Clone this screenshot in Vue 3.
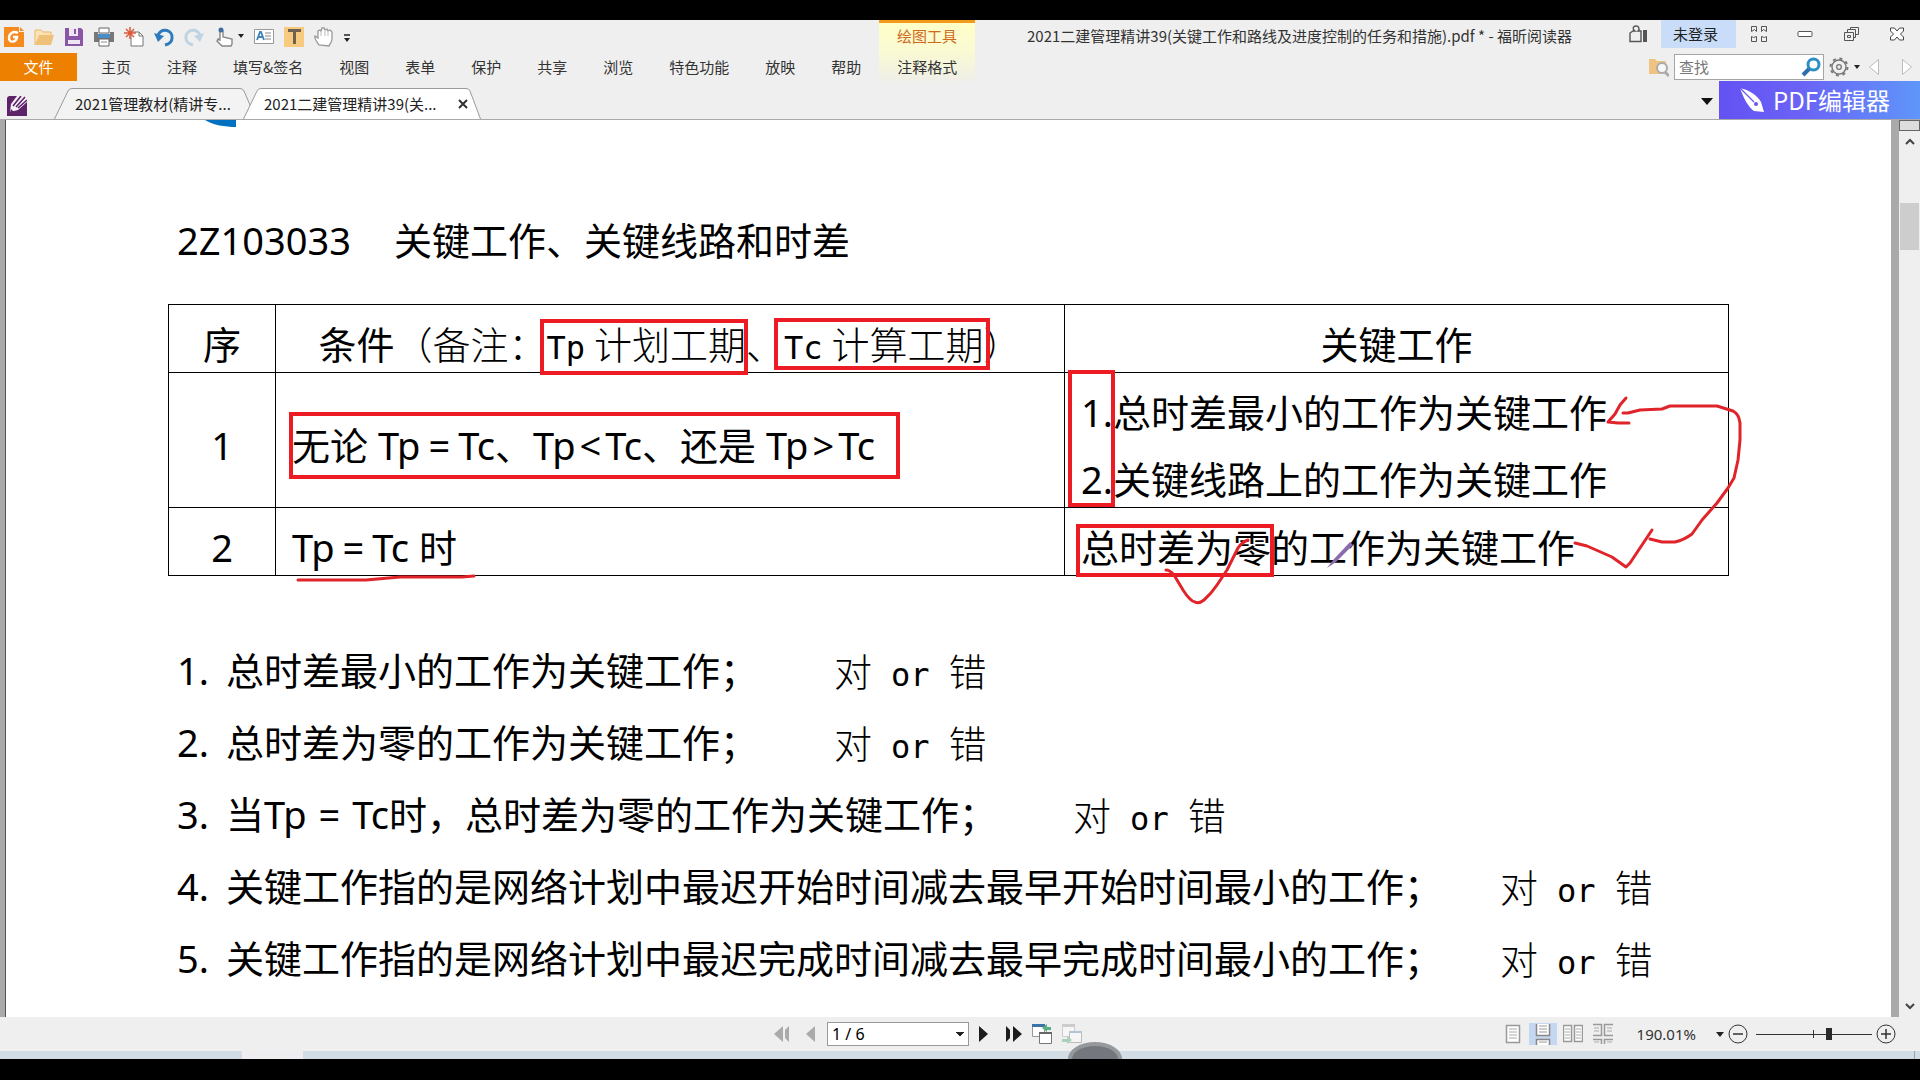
<script setup>
import { ref } from 'vue'

const menus = ['主页', '注释', '填写&签名', '视图', '表单', '保护', '共享', '浏览', '特色功能', '放映', '帮助']
const page = ref('1 / 6')
const keyword = ref('')
const zoom = ref(64)

const questions = [
  { text: '总时差最小的工作为关键工作；' },
  { text: '总时差为零的工作为关键工作；' },
  { formula: true, text: '时，总时差为零的工作为关键工作；' },
  { text: '关键工作指的是网络计划中最迟开始时间减去最早开始时间最小的工作；', long: true },
  { text: '关键工作指的是网络计划中最迟完成时间减去最早完成时间最小的工作；', long: true }
]
</script>

<template>
  <div class="screen">
    <header class="chrome">
      <div class="title-row">
        <div class="quick">
          <button aria-label="福昕">
            <svg width="20" height="20"><path d="M0 0h15v5h5v15H0z" fill="#f58a1f" /><path d="M16 0l4 4h-4z" fill="#f58a1f" /><path d="M14 6C9 3 5 7 5 11c0 5 7 5 8-1h-4" fill="none" stroke="#fff" stroke-width="2.4" /></svg>
          </button>
          <button aria-label="打开">
            <svg width="20" height="20"><path d="M1 18V3h6l2 2h8v4" fill="#fbe3b5" stroke="#e9b765" /><path d="M1 18L5 8h15l-3 10z" fill="#efc078" /></svg>
          </button>
          <button aria-label="保存">
            <svg width="20" height="20"><path d="M1 1h16l2 2v16H1z" fill="#8a56a6" /><path d="M5 1h9v8H5z" fill="#efe6f4" /><path d="M10 2h2v5h-2z" fill="#8a56a6" /><path d="M4 13h12v4H4z" fill="#efe6f4" /></svg>
          </button>
          <button aria-label="打印">
            <svg width="20" height="20"><path d="M5 1h10v5H5z" fill="#fff" stroke="#666" /><path d="M0 5h4v5h12V5h4v10H0z" fill="#777" /><path d="M4 7h12v4H4z" fill="#4a8dc6" /><path d="M5 12h10v7H5z" fill="#fff" stroke="#666" /><path d="M7 15h6" stroke="#888" /></svg>
          </button>
          <button aria-label="新建">
            <svg width="20" height="20"><path d="M7 5h8l4 4v10H7z" fill="#fff" stroke="#777" /><path d="M15 5v4h4" fill="none" stroke="#777" /><path d="M6 0v12M0 6h12M2 2l8 8M10 2l-8 8" stroke="#e0593a" stroke-width="1.5" /></svg>
          </button>
          <button aria-label="撤销">
            <svg width="20" height="20"><path d="M4 8C8 0 19 3 18 11c0 4-3 6-7 7" fill="none" stroke="#2d7bbd" stroke-width="3" /><path d="M0 6l10 3-6 6z" fill="#2d7bbd" /></svg>
          </button>
          <button aria-label="重做">
            <svg width="20" height="20"><path d="M16 8C12 0 1 3 2 11c0 4 3 6 7 7" fill="none" stroke="#bfd4e3" stroke-width="3" /><path d="M20 6L10 9l6 6z" fill="#bfd4e3" /></svg>
          </button>
          <button class="wide" aria-label="手型">
            <svg width="30" height="20"><path d="M6 13V4a2 2 0 0 1 3 0v6l9 2v5l-1 2H8l-5-5 1-2z" fill="#fff" stroke="#888" stroke-width="1.4" /><circle cx="7" cy="3" r="2.5" fill="#3c6ea3" /><path d="M24 7h6l-3 4z" fill="#222" /></svg>
          </button>
          <button aria-label="文本框">
            <svg width="20" height="20"><path d="M.5 2.500h19v14H.5z" fill="#fff" stroke="#999" /><path d="M3 13l3-8h1l3 8M4 10h5" fill="none" stroke="#3f83bd" stroke-width="1.800" /><path d="M11 6h6M11 9h6M11 12h6" stroke="#888" /></svg>
          </button>
          <button aria-label="高亮">
            <svg width="20" height="20"><path d="M0 0h20v20H0z" fill="#f7ca7f" /><path d="M4 2h13v3h-5v12H9V5H4z" fill="#6f6250" /></svg>
          </button>
          <button aria-label="平移">
            <svg width="20" height="20"><path d="M5 18C2 14 0 11 1 9l3 2V4l2-1 1 1 1-3h2l1 2 2-1 1 2 2-1 2 2v7c0 3-2 4-3 7z" fill="#fff" stroke="#999" stroke-width="1.300" /><path d="M7 4v5M11 3v6M14 4v5" stroke="#bbb" /></svg>
          </button>
          <button aria-label="自定义">
            <svg width="20" height="20"><path d="M0 8h6" stroke="#222" stroke-width="1.500" /><path d="M0 11h6l-3 4z" fill="#222" /></svg>
          </button>
        </div>
        <div class="context-title">绘图工具</div>
        <h1 class="doc-title">2021二建管理精讲39(关键工作和路线及进度控制的任务和措施).pdf * - 福昕阅读器</h1>
        <div class="window-buttons">
          <button aria-label="点赞">
            <svg width="20" height="20"><path d="M2 17.500V9l3-2h2C4 5 5 2 8 2c3 0 4 3 2 5h3v10.500z" fill="none" stroke="#555" stroke-width="1.400" /><path d="M15 6h4v12h-4z" fill="#555" /></svg>
          </button>
          <button class="login">未登录</button>
          <button aria-label="功能区">
            <svg width="18" height="18" fill="none" stroke="#555"><path d="M1.500 1.500h5v5l-2-2-3 2zM11.500 1.500h5v5l-3-2-2 2zM1.500 11.500l2 1 3-1v5h-5zM11.500 11.500l3 1 2-1v5h-5z" /></svg>
          </button>
          <button aria-label="最小化">
            <svg width="16" height="16"><rect x="1" y="5.500" width="14" height="5" rx="1" fill="#fff" stroke="#555" /></svg>
          </button>
          <button aria-label="还原">
            <svg width="16" height="16" fill="none" stroke="#555"><path d="M1.500 6.500h9v8h-9zM4.500 9.500h3v2h-3zM4.500 6V3.500h8v8h-2M7.500 3V1.500h8v7h-3" /></svg>
          </button>
          <button aria-label="关闭">
            <svg width="16" height="16" fill="#fff" stroke="#444"><path d="M1.500 2h4L8 5l2.500-3h4v3l-3 3 3 3v3h-4L8 11l-2.500 3h-4v-3l3-3-3-3z" /></svg>
          </button>
        </div>
      </div>

      <div class="menu-row">
        <button class="file">文件</button>
        <nav class="menus">
          <button v-for="m in menus" :key="m">{{ m }}</button>
          <button class="context-tab">注释格式</button>
        </nav>
        <div class="finder">
          <button aria-label="高级查找">
            <svg width="20" height="20"><path d="M0 2h6l2 2h9v13H0z" fill="#efc483" /><circle cx="13" cy="11" r="5" fill="#f7f7f7" stroke="#aaa" stroke-width="2" /><path d="M16 15l4 4" stroke="#aaa" stroke-width="3" /></svg>
          </button>
          <label class="search">
            <input v-model="keyword" type="text" placeholder="查找" aria-label="查找" />
            <svg width="20" height="20"><circle cx="12.500" cy="7.500" r="5.500" fill="none" stroke="#2b8fc4" stroke-width="3" /><path d="M8 12l-6 6" stroke="#2a6fae" stroke-width="4" /></svg>
          </label>
          <button aria-label="设置">
            <svg width="34" height="20"><circle cx="10" cy="10" r="7" fill="none" stroke="#777" stroke-width="1.400" /><circle cx="10" cy="10" r="8.500" fill="none" stroke="#777" stroke-width="2" stroke-dasharray="3 3.700" /><circle cx="10" cy="10" r="2.300" fill="none" stroke="#777" stroke-width="1.300" /><path d="M25 8h6l-3 4z" fill="#222" /></svg>
          </button>
          <div class="steps">
            <button aria-label="上一个"><svg width="12" height="18"><path d="M10.500 1.500v15l-9-7.500z" fill="#fff" stroke="#bbb" /></svg></button>
            <button aria-label="下一个"><svg width="12" height="18"><path d="M1.500 1.500v15l9-7.500z" fill="#fff" stroke="#bbb" /></svg></button>
          </div>
        </div>
      </div>

      <div class="tab-row">
        <button class="start" aria-label="起始页">
          <svg width="20" height="20"><path d="M0 3q0-3 3-3h14q3 0 3 3v17H0z" fill="#5d2268" /><path d="M10 0L4 8l-1 8 8-2 9-8V0z" fill="#f6f0f7" /><path d="M14 0L6 10M18 1L9 11M20 4l-9 8" stroke="#5d2268" stroke-width="1.600" /><path d="M3 17l1-4 3 3z" fill="#5d2268" /></svg>
        </button>
        <button class="tab">
          <svg class="tab-shape" width="202" height="31"><path d="M.5 31L14 3q1-2.500 4-2.500h168q3 0 4 2.500l12 28" fill="#f3f3f3" stroke="#9a9a9a" /></svg>
          <span>2021管理教材(精讲专...</span>
        </button>
        <button class="tab current">
          <svg class="tab-shape" width="238" height="31"><path d="M.5 31L14 3q1-2.500 4-2.500h205q3 0 4 2.500l10.500 28" fill="#fff" stroke="#9a9a9a" /></svg>
          <span>2021二建管理精讲39(关...</span>
          <svg class="x" width="10" height="10"><path d="M1 1l8 8M9 1L1 9" stroke="#333" stroke-width="2" /></svg>
        </button>
        <button class="tab-list" aria-label="标签列表"><svg width="12" height="7"><path d="M0 0h12L6 7z" fill="#111" /></svg></button>
        <button class="editor">
          <svg width="26" height="28"><path d="M1 2c9 2 17 7 21 14l3 10-10-1C9 21 4 11 1 2z" fill="#fff" /><path d="M1 2l14 14" stroke="#6657f2" stroke-width="1.200" /><circle cx="17" cy="18" r="2" fill="#6657f2" /></svg>
          <span>PDF编辑器</span>
        </button>
      </div>
    </header>

    <main class="viewer">
      <article class="page">
        <h2><span>2Z103033</span><span>关键工作、关键线路和时差</span></h2>
        <table>
          <thead>
            <tr>
              <th class="no">序</th>
              <th>条件<span class="kai">（备注：<i>Tp</i><b>计划工期</b>、<i>Tc</i><b>计算工期</b>）</span></th>
              <th class="key">关键工作</th>
            </tr>
          </thead>
          <tbody>
            <tr class="tall">
              <td class="no">1</td>
              <td>无论 Tp<span class="eq">=</span>Tc、Tp<span class="cmp">&lt;</span>Tc、还是 Tp<span class="cmp">&gt;</span>Tc</td>
              <td>
                <div class="lines"><p>1.总时差最小的工作为关键工作</p><p>2.关键线路上的工作为关键工作</p></div>
              </td>
            </tr>
            <tr>
              <td class="no">2</td>
              <td>Tp<span class="eq">=</span>Tc 时</td>
              <td>总时差为零的工作为关键工作</td>
            </tr>
          </tbody>
        </table>
        <ol>
          <li v-for="(q, i) in questions" :key="i">
            <span class="num">{{ i + 1 }}.</span>
            <span><template v-if="q.formula">当Tp<span class="eq">=</span>Tc</template>{{ q.text }}</span>
            <span class="answer" :class="{ near: q.long }">对<i>or</i>错</span>
          </li>
        </ol>
        <svg class="ink" fill="none" stroke="#e0242a" stroke-width="3" stroke-linecap="round" stroke-linejoin="round">
          <g transform="translate(-6 -120)">
            <path d="M205 120c8 5 20 7 31 7v-7z" fill="#0070c0" stroke="none" />
            <g stroke="#ed1c24" stroke-width="4" stroke-linejoin="miter">
              <rect x="542" y="321" width="204" height="52" />
              <rect x="776" y="320" width="212" height="48" />
              <rect x="291" y="414" width="607" height="63" />
              <rect x="1070" y="372" width="43" height="133" />
              <rect x="1078" y="526" width="194" height="49" />
            </g>
            <path d="M298 580H366L400 577H462L474 576" />
            <path d="M1166 570Q1170 570 1174 575L1183 590Q1190 601 1195 602Q1199 604 1204 600Q1211 594 1217 585L1227 570L1238 548Q1242 542 1248 540" />
            <path d="M1626 398L1620 405L1615 414L1608 422L1618 423H1629" />
            <path d="M1623 413H1628L1640 410L1662 409L1670 406H1717L1733 411Q1739 414 1740 423V440L1738 460L1734 478L1728 488L1717 503L1702 520L1692 534Q1684 540 1675 542H1662L1650 539" />
            <path d="M1575 543L1587 546L1612 557L1626 567L1630 563L1642 545L1652 530" />
            <path d="M1327 568L1334 559L1350 542L1353 545L1336 562z" fill="#8b6bab" stroke="none" />
          </g>
        </svg>
      </article>
      <aside class="scrollbar">
        <div class="split"></div>
        <button aria-label="向上滚动"><svg width="10" height="7"><path d="M1 6l4-4 4 4" fill="none" stroke="#444" stroke-width="2" /></svg></button>
        <div class="track"><div class="thumb"></div></div>
        <button aria-label="向下滚动"><svg width="10" height="7"><path d="M1 1l4 4 4-4" fill="none" stroke="#444" stroke-width="2" /></svg></button>
      </aside>
    </main>

    <footer class="status">
      <div class="pager">
        <button aria-label="第一页"><svg width="16" height="16" fill="#aaa"><path d="M9 0v16L0 8zM15 0v16l-4-4V4z" /></svg></button>
        <button aria-label="上一页"><svg width="16" height="16" fill="#aaa"><path d="M11 0v16L2 8z" /></svg></button>
        <select v-model="page" aria-label="页码"><option>1 / 6</option></select>
        <button aria-label="下一页"><svg width="16" height="16" fill="#1c1c1c"><path d="M3 0v16l9-8z" /></svg></button>
        <button aria-label="最后一页"><svg width="16" height="16" fill="#1c1c1c"><path d="M7 0v16l9-8zM0 0v16l4-4V4z" /></svg></button>
        <button class="view" aria-label="上一视图"><svg width="20" height="20"><path d="M.5.5h12v12H.5z" fill="#fff" stroke="#999" /><path d="M0 0h13v3H0z" fill="#3b72a8" /><path d="M7.500 9.500h12v10h-12z" fill="#fff" stroke="#777" /><path d="M7 8h13v2H7z" fill="#666" /><path d="M10 4l5-4v3h4v3h-4v2z" fill="#5bae83" /></svg></button>
        <button class="view" aria-label="下一视图"><svg width="20" height="20"><path d="M.5.5h12v12H.5z" fill="#f6f6f6" stroke="#ccc" /><path d="M0 0h13v3H0z" fill="#ccc" /><path d="M7.500 7.500h12v11h-12z" fill="#f6f6f6" stroke="#bbb" /><path d="M7 7h13v2H7z" fill="#b5c4d2" /><path d="M10 16l-5-4v3H0v3h5v2z" fill="#a9d0ba" /></svg></button>
      </div>
      <div class="zoomer">
        <button class="mode" aria-label="单页"><svg width="20" height="20"><path d="M3.500 1.500h13v17h-13z" fill="#fff" stroke="#999" stroke-width="1.500" /><path d="M6 5h8M6 8h8M6 11h8M6 14h8" stroke="#aaa" /></svg></button>
        <button class="mode on" aria-label="连续"><svg width="20" height="22"><path d="M3.500 1v11.500h13V1M3.500 22v-5.500h13V22" fill="#fff" stroke="#888" stroke-width="1.500" /><path d="M6 3h8M6 6h8M6 9h8M6 19h8" stroke="#999" /></svg></button>
        <button class="mode" aria-label="双页"><svg width="20" height="20"><path d="M.5 1.500h8v16h-8zM11.500 1.500h8v16h-8z" fill="#fff" stroke="#999" stroke-width="1.500" /><path d="M2 5h5M2 8h5M2 11h5M2 14h5M13 5h5M13 8h5M13 11h5M13 14h5" stroke="#aaa" /></svg></button>
        <button class="mode" aria-label="双页连续"><svg width="20" height="22"><path d="M0 1.500h8.500v11H0M20 1.500h-8.500v11H20M0 16.500h8.500V21M20 16.500h-8.500V21" fill="none" stroke="#999" stroke-width="1.500" /><path d="M1 5h5M1 8h5M14 5h5M14 8h5M1 19h5M14 19h5" stroke="#aaa" /></svg></button>
        <button class="percent">190.01%<svg width="8" height="5"><path d="M0 0h8L4 5z" fill="#222" /></svg></button>
        <button aria-label="缩小"><svg width="20" height="20" fill="none" stroke="#333"><circle cx="10" cy="10" r="9" /><path d="M5 10h10" stroke-width="1.500" /></svg></button>
        <div class="slider">
          <input v-model="zoom" type="range" min="0" max="100" aria-label="缩放" />
        </div>
        <button aria-label="放大"><svg width="20" height="20" fill="none" stroke="#333"><circle cx="10" cy="10" r="9" /><path d="M5 10h10M10 5v10" stroke-width="1.500" /></svg></button>
      </div>
    </footer>
    <div class="taskbar">
      <div class="task"></div>
      <div class="bubble"></div>
      <div class="desktop-edge"></div>
    </div>
  </div>
</template>

<style>
body {
  margin: 0;
  background: #000;
}
</style>

<style scoped>
* {
  box-sizing: border-box;
}
.screen {
  height: 100vh;
  padding: 20px 0 21px;
  display: flex;
  flex-direction: column;
  overflow: hidden;
  background: #000;
  font: 15px/20px "Noto Sans CJK SC", sans-serif;
  color: #333;
}
button {
  border: 0;
  padding: 0;
  background: none;
  font: inherit;
  color: inherit;
  white-space: nowrap;
}
svg {
  display: block;
}
.chrome {
  flex: none;
  background: #efefef;
  border-bottom: 1px solid #a9a9a9;
}
.title-row {
  display: flex;
  height: 33px;
}
.quick {
  flex: 0 0 879px;
  display: flex;
  align-items: center;
  gap: 10px;
  padding-left: 4px;
}
.quick button {
  width: 20px;
}
.quick .wide {
  width: 30px;
}
.context-title {
  flex: 0 0 96px;
  border-top: 3px solid #f29a1c;
  background: linear-gradient(#ffffc8, #f9f9d4);
  color: #cf6a1d;
  text-align: center;
  line-height: 26px;
}
.doc-title {
  flex: 1;
  margin: 0;
  padding-left: 52px;
  font-size: 15px;
  font-weight: 400;
  line-height: 32px;
  white-space: nowrap;
}
.window-buttons {
  display: flex;
  height: 28px;
}
.window-buttons button {
  width: 46px;
  display: flex;
  align-items: center;
  justify-content: center;
}
.window-buttons .login {
  width: 75px;
  padding-right: 6px;
  background: #c9dcf8;
  color: #222;
}
.menu-row {
  display: flex;
  height: 28px;
}
.file {
  width: 77px;
  background: #ee8000;
  color: #fff;
}
.menus {
  display: flex;
  margin-left: 6px;
  flex: 1;
}
.menus button {
  padding: 0 18px;
}
.menus .context-tab {
  background: linear-gradient(#f9f9d4, #efefe8);
}
.finder {
  display: flex;
  align-items: center;
  gap: 5px;
  padding-right: 7px;
}
.steps {
  display: flex;
  gap: 21px;
}
.search {
  display: flex;
  align-items: center;
  width: 150px;
  height: 26px;
  padding: 0 2px 0 4px;
  border: 1px solid #a5a5a5;
  background: #fff;
}
.search input {
  flex: 1;
  min-width: 0;
  border: 0;
  padding: 0;
  font: inherit;
  outline: 0;
  background: none;
}
.search input::placeholder {
  color: #777;
}
.tab-row {
  display: flex;
  height: 38px;
  align-items: flex-end;
}
.start {
  width: 54px;
  padding: 0 0 3px 7px;
}
.tab {
  position: relative;
  width: 189px;
  height: 31px;
  padding-left: 21px;
  text-align: left;
  color: #222;
}
.tab.current {
  width: 238px;
  display: flex;
  align-items: center;
}
.tab-shape {
  position: absolute;
  left: 0;
  top: 0;
}
.tab span {
  position: relative;
  flex: 1;
}
.tab .x {
  position: relative;
  margin-right: 13px;
}
.tab-list {
  margin-left: auto;
  padding: 0 6px 14px;
}
.editor {
  width: 201px;
  height: 38px;
  display: flex;
  align-items: center;
  gap: 8px;
  padding-left: 20px;
  background: linear-gradient(90deg, #6452f3, #6a62f6 40%, #5f96fa);
  color: #fff;
  font-size: 24px;
}
.viewer {
  flex: 1;
  min-height: 0;
  display: flex;
  background: #aaa;
  padding-left: 5px;
}
.page {
  position: relative;
  flex: 1;
  overflow: hidden;
  margin-right: 8px;
  padding: 92px 162px 0;
  border-left: 1px solid #555;
  background: #fff;
  color: #000;
  font: 38px/52px "Noto Sans", "Noto Sans CJK SC", sans-serif;
  white-space: nowrap;
}
h2 {
  display: flex;
  gap: 43px;
  margin: 0 0 36px;
  padding-left: 9px;
  font: inherit;
  line-height: 56px;
}
table {
  width: 100%;
  table-layout: fixed;
  border-collapse: collapse;
}
th,
td {
  height: 68px;
  padding: 10px 0 0 16px;
  border: 1px solid #000;
  font-weight: 400;
  text-align: left;
  vertical-align: middle;
}
th,
.no {
  padding-left: 0;
  text-align: center;
}
.no {
  width: 107px;
}
.key {
  width: 664px;
}
.tall td {
  height: 135px;
}
.lines {
  display: flex;
  flex-direction: column;
  gap: 15px;
}
p {
  margin: 0;
}
.kai,
.answer {
  font-family: "Noto Sans CJK SC", sans-serif;
  font-weight: 300;
}
b {
  font-weight: inherit;
  margin-left: 9px;
}
i {
  font: 32px/32px "DejaVu Sans Mono", monospace;
}
.eq {
  margin: 0 8px;
}
li .eq {
  margin: 0 12px;
}
.cmp {
  margin: 0 4px;
}
ol {
  list-style: none;
  margin: 58px 0 0;
  padding: 0 0 0 9px;
  line-height: 72px;
}
li {
  display: flex;
  height: 72px;
}
.num {
  width: 49px;
}
.answer {
  margin-left: 76px;
}
.answer.near {
  margin-left: 58px;
}
.answer i {
  margin: 0 19px;
}
.ink {
  position: absolute;
  left: 0;
  top: 0;
  width: 100%;
  height: 100%;
}
.scrollbar {
  width: 21px;
  display: flex;
  flex-direction: column;
  background: #efefef;
}
.split {
  height: 11px;
  border: 1px solid #666;
  background: #ddd;
}
.scrollbar button {
  height: 21px;
  display: flex;
  align-items: center;
  justify-content: center;
}
.track {
  flex: 1;
  padding: 51px 1px 0;
}
.thumb {
  height: 47px;
  background: #cdcdcd;
}
.status {
  flex: none;
  height: 34px;
  display: flex;
  align-items: center;
  justify-content: space-between;
  background: #efefef;
  padding: 0 24px 0 40%;
}
.pager,
.zoomer {
  display: flex;
  align-items: center;
}
.pager {
  gap: 7px;
  padding-left: 6px;
}
.pager button + button {
  margin-left: 7px;
}
.pager .view + .view,
.pager button + .view {
  margin-left: 3px;
}
select {
  appearance: none;
  width: 142px;
  height: 24px;
  padding: 0 4px;
  border: 1px solid #999;
  border-radius: 0;
  background: #fff conic-gradient(from -50deg at 50% 100%, #222 100deg, transparent 0) no-repeat right 4px center / 8px 4px;
  font: 16px/20px "Noto Sans", sans-serif;
  color: #000;
}
.mode {
  width: 28px;
  height: 22px;
  margin-right: 2px;
  display: flex;
  align-items: center;
  justify-content: center;
}
.mode.on {
  background: #c4d6f0;
}
.percent {
  display: flex;
  align-items: center;
  gap: 20px;
  margin: 0 4px 0 18px;
  font-family: "Noto Sans", sans-serif;
}
.slider {
  position: relative;
  width: 116px;
  margin: 0 4px 0 8px;
}
.slider::before {
  content: "";
  position: absolute;
  left: 49%;
  top: 50%;
  width: 1px;
  height: 8px;
  margin-top: -4px;
  background: #333;
}
.slider input {
  position: relative;
  display: block;
  appearance: none;
  width: 100%;
  height: 12px;
  margin: 0;
  background: linear-gradient(#333, #333) no-repeat center / 100% 1px;
}
.slider input::-webkit-slider-thumb {
  appearance: none;
  width: 6px;
  height: 12px;
  background: #2a2a2a;
}
.taskbar {
  position: relative;
  flex: none;
  height: 8px;
  background: #d2dce5;
}
.task {
  width: 61px;
  height: 8px;
  margin-left: 242px;
  background: #eeeef1;
}
.bubble {
  position: absolute;
  left: 57%;
  bottom: 0;
  width: 54px;
  height: 17px;
  margin-left: -26px;
  border: 4px solid #96999c;
  border-bottom: 0;
  border-radius: 27px 27px 0 0 / 17px 17px 0 0;
  background: #74787e;
}
.desktop-edge {
  position: absolute;
  right: 5px;
  top: 0;
  width: 1px;
  height: 8px;
  background: #9aa4ad;
}
</style>
